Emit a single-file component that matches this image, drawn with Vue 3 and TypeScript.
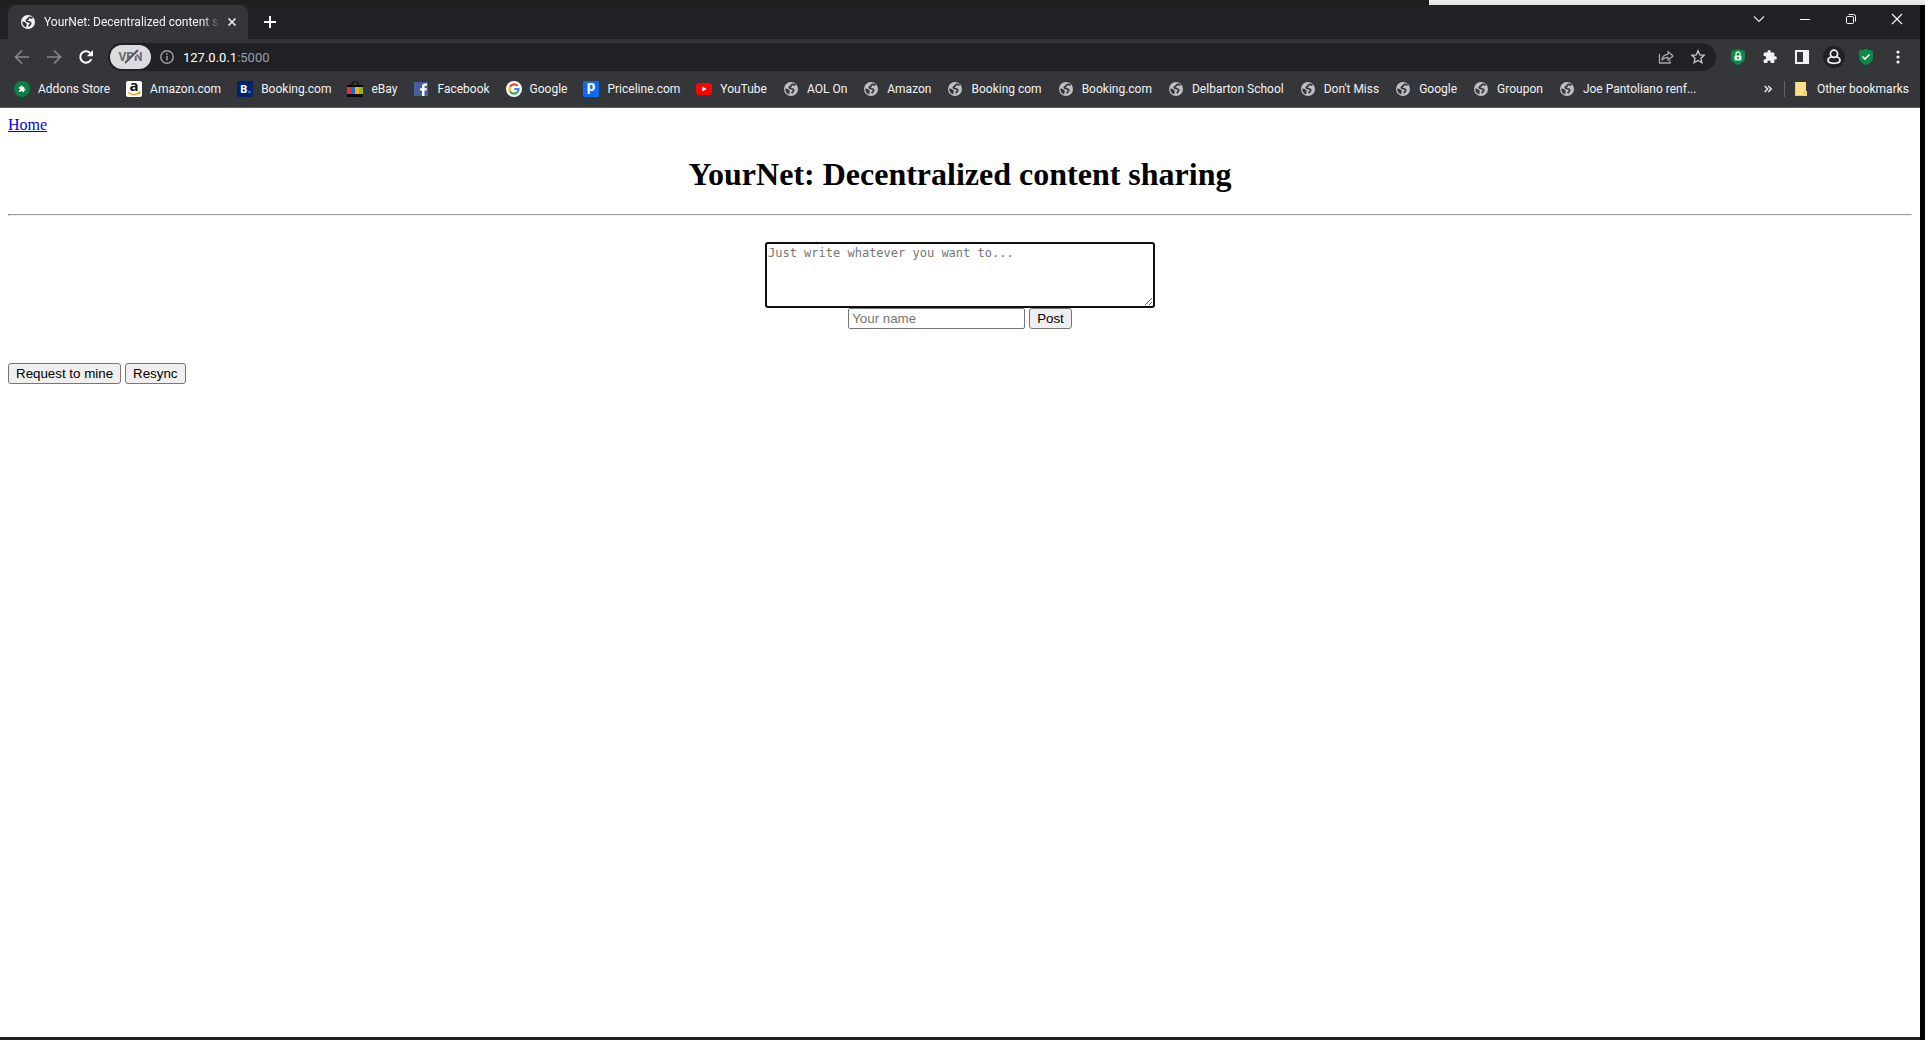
<script setup lang="ts">
import { ref } from 'vue'

interface Bookmark {
  label: string
  icon: string
}

const bookmarks: Bookmark[] = [
  { label: 'Addons Store', icon: 'addons' },
  { label: 'Amazon.com', icon: 'amazon' },
  { label: 'Booking.com', icon: 'booking' },
  { label: 'eBay', icon: 'ebay' },
  { label: 'Facebook', icon: 'facebook' },
  { label: 'Google', icon: 'google' },
  { label: 'Priceline.com', icon: 'priceline' },
  { label: 'YouTube', icon: 'youtube' },
  { label: 'AOL On', icon: 'globe' },
  { label: 'Amazon', icon: 'globe' },
  { label: 'Booking com', icon: 'globe' },
  { label: 'Booking.com', icon: 'globe' },
  { label: 'Delbarton School', icon: 'globe' },
  { label: "Don't Miss", icon: 'globe' },
  { label: 'Google', icon: 'globe' },
  { label: 'Groupon', icon: 'globe' },
  { label: 'Joe Pantoliano renf...', icon: 'globe' },
]

const content = ref('')
const author = ref('')
</script>

<template>
  <div class="desktop">
    <svg class="defs" aria-hidden="true">
      <symbol id="globe" viewBox="0 0 16 16">
        <circle cx="8" cy="8" r="7" fill="currentColor" />
        <path d="M12.500 4.200C10.500 2.800 8.500 3.200 8.300 4.600 8.200 5.500 6.300 5.400 6.300 6.700 6.300 8 10.700 7.200 10.700 9.200 10.700 10.600 9.300 10.700 9 12.300" fill="none" stroke="#35363a" stroke-width="1.800" />
        <path d="M2.300 7.600C4.500 8 6.800 8.700 6.800 10.300 6.800 11.200 6.200 11.800 6.300 13.300L4.600 12.700C3 11.500 2.200 9.700 2.300 7.600Z" fill="#35363a" />
      </symbol>
      <symbol id="puzzle" viewBox="0 0 16 16">
        <path fill="currentColor" d="M13.300 7.300h-.9V4.700c0-.7-.5-1.200-1.200-1.200H8.700v-.9a1.600 1.600 0 0 0-3.200 0v.9H2.900c-.7 0-1.200.5-1.200 1.200v2.400h.9a1.700 1.700 0 0 1 0 3.400h-.9v2.400c0 .7.5 1.200 1.200 1.200h2.400v-.9a1.700 1.700 0 0 1 3.400 0v.9h2.500c.7 0 1.200-.5 1.200-1.200v-2.400h.9a1.600 1.600 0 0 0 0-3.200Z" />
      </symbol>
    </svg>

    <div class="backdrop"><span></span></div>

    <div class="window">
      <header class="chrome">
        <div class="tabstrip">
          <div class="tab">
            <svg class="i16 bright"><use href="#globe" /></svg>
            <span class="tab-title">YourNet: Decentralized content sharing</span>
            <button class="icon-btn small" aria-label="Close tab">
              <svg width="10" height="10" viewBox="0 0 10 10"><path d="M1.500 1.500l7 7M8.500 1.500l-7 7" stroke="#e8eaed" stroke-width="1.700" /></svg>
            </button>
          </div>
          <button class="icon-btn newtab" aria-label="New tab">
            <svg width="12" height="12" viewBox="0 0 12 12"><path d="M6 0v12M0 6h12" stroke="#fff" stroke-width="2" /></svg>
          </button>
          <div class="controls">
            <button class="win-btn" aria-label="Search tabs">
              <svg width="12" height="12" viewBox="0 0 12 12"><path d="M1 3.500l5 5 5-5" fill="none" stroke="#e0e0e0" stroke-width="1.200" /></svg>
            </button>
            <button class="win-btn" aria-label="Minimize">
              <svg width="10" height="10" viewBox="0 0 10 10"><path d="M0 5.500h10" stroke="#fff" /></svg>
            </button>
            <button class="win-btn" aria-label="Restore">
              <svg width="10" height="10" viewBox="0 0 10 10"><g fill="none" stroke="#fff"><rect x=".5" y="2.500" width="7" height="7" rx="1" /><path d="M2.500.5H7.500a2 2 0 0 1 2 2v5" /></g></svg>
            </button>
            <button class="win-btn" aria-label="Close">
              <svg width="10" height="10" viewBox="0 0 10 10"><path d="M0 0l10 10M10 0L0 10" stroke="#fff" stroke-width="1.200" /></svg>
            </button>
          </div>
        </div>

        <div class="toolbar">
          <button class="icon-btn" aria-label="Back">
            <svg width="16" height="16" viewBox="0 0 16 16"><path d="M15 8H2M8 1.500L1.500 8 8 14.500" fill="none" stroke="#86888c" stroke-width="1.700" /></svg>
          </button>
          <button class="icon-btn" aria-label="Forward">
            <svg width="16" height="16" viewBox="0 0 16 16"><path d="M1 8h13M8 1.500L14.500 8 8 14.500" fill="none" stroke="#86888c" stroke-width="1.700" /></svg>
          </button>
          <button class="icon-btn" aria-label="Reload">
            <svg width="16" height="16" viewBox="0 0 16 16"><path d="M13.300 10a5.700 5.700 0 1 1-1.200-6" fill="none" stroke="#fff" stroke-width="2" /><path d="M15 1v6.200H8.800Z" fill="#fff" /></svg>
          </button>
          <div class="omnibox">
            <button class="vpn" aria-label="VPN off">
              <span>VPN</span>
              <svg class="slash" width="20" height="14" viewBox="0 0 20 14"><path d="M4 14L17 1" stroke="#dadce0" stroke-width="2" /><path d="M3 13L16 0" stroke="#55585c" stroke-width="2" /></svg>
            </button>
            <svg class="info" width="14" height="14" viewBox="0 0 14 14"><circle cx="7" cy="7" r="6.200" fill="none" stroke="#9aa0a6" stroke-width="1.400" /><path d="M7 6v4.500M7 3.200v1.600" stroke="#9aa0a6" stroke-width="1.500" /></svg>
            <div class="url"><b>127.0.0.1</b>:5000</div>
            <button class="icon-btn" aria-label="Share">
              <svg width="16" height="16" viewBox="0 0 16 16"><g fill="none" stroke="#a4a6a9" stroke-width="1.300"><path d="M1.500 5v9h10.500v-2.500" /><path d="M4 11c.3-4 2.500-5.500 6-5.700V2.500L15 7l-5 4.300V8.500C7.500 8.400 5.500 9 4 11Z" stroke-linejoin="round" /></g></svg>
            </button>
            <button class="icon-btn" aria-label="Bookmark this tab">
              <svg width="16" height="16" viewBox="0 0 16 16"><path d="M8 1.800l1.800 4.100 4.400.4-3.300 3 1 4.400L8 11.400l-3.900 2.300 1-4.400-3.300-3 4.400-.4Z" fill="none" stroke="#c8cacd" stroke-width="1.300" /></svg>
            </button>
          </div>
          <div class="extensions">
            <button class="icon-btn" aria-label="Password extension">
              <svg width="16" height="16" viewBox="0 0 16 16"><path d="M8 0l7 2v6c0 4-3 6.500-7 8-4-1.500-7-4-7-8V2Z" fill="#0a8a45" /><path d="M6 7V5a2 2 0 0 1 4 0v2" fill="none" stroke="#dff5e8" stroke-width="1.300" /><rect x="4.500" y="6.500" width="7" height="5" rx="1" fill="#dff5e8" /><path d="M7 9h2" stroke="#0a8a45" stroke-width="1.500" /></svg>
            </button>
            <button class="icon-btn" aria-label="Extensions"><svg class="i16 bright"><use href="#puzzle" /></svg></button>
            <button class="icon-btn" aria-label="Side panel">
              <svg width="14" height="14" viewBox="0 0 14 14"><path fill="#f1f3f4" fill-rule="evenodd" d="M0 0h14v14H0ZM2 2v10h6V2Z" /></svg>
            </button>
            <button class="icon-btn" aria-label="Profile">
              <svg width="22" height="22" viewBox="0 0 22 22"><circle cx="11" cy="11" r="11" fill="#202124" /><g fill="none" stroke="#f1f3f4" stroke-width="1.700"><circle cx="11" cy="7.800" r="3.600" /><path d="M8.500 10.800C6 11.500 5 13 5 14.300c0 2 2.500 3 6 3s6-1 6-3c0-1.300-1-2.800-3.500-3.500" /></g></svg>
            </button>
            <button class="icon-btn" aria-label="Safe browsing">
              <svg width="16" height="16" viewBox="0 0 16 16"><path d="M8 0l7 2v6c0 4-3 6.500-7 8-4-1.500-7-4-7-8V2Z" fill="#0a8a45" /><path d="M4.500 7.500L7 10l4.500-4.500" fill="none" stroke="#fff" stroke-width="1.600" /></svg>
            </button>
            <button class="icon-btn" aria-label="Menu">
              <svg width="4" height="14" viewBox="0 0 4 14"><g fill="#f1f3f4"><circle cx="2" cy="2" r="1.600" /><circle cx="2" cy="7" r="1.600" /><circle cx="2" cy="12" r="1.600" /></g></svg>
            </button>
          </div>
        </div>

        <nav class="bookmarks" aria-label="Bookmarks">
          <a v-for="(b, i) in bookmarks" :key="i" href="#" class="bookmark">
            <svg class="i16" viewBox="0 0 16 16">
              <use v-if="b.icon === 'globe'" href="#globe" />
              <g v-else-if="b.icon === 'addons'">
                <circle cx="8" cy="8" r="8" fill="#0a8043" />
                <use href="#puzzle" x="4" y="4" width="8" height="8" color="#fff" />
              </g>
              <g v-else-if="b.icon === 'amazon'">
                <rect width="16" height="16" rx="2" fill="#fff" />
                <text x="8" y="10" text-anchor="middle" class="glyph" font-size="15" fill="#111">a</text>
                <path d="M2 11.500c4 2.700 8 2.700 11.500.3M12 11.300l2-.2-.4 2" fill="none" stroke="#f90" stroke-width="1.200" />
              </g>
              <g v-else-if="b.icon === 'booking'">
                <rect width="16" height="16" rx="2" fill="#02236c" />
                <text x="3" y="12" class="glyph" font-size="11" fill="#fff">B</text>
                <circle cx="12.500" cy="11" r="1.200" fill="#18a0e8" />
              </g>
              <g v-else-if="b.icon === 'ebay'">
                <path d="M5 5V3a3 2.500 0 0 1 6 0v2" fill="none" stroke="#0a0a0a" stroke-width="1.200" />
                <path d="M0 4h16v12H0Z" fill="#0a0a0a" />
                <path d="M0 6h4v7H0Z" fill="#e53238" /><path d="M4 6h4v7H4Z" fill="#0f6fd8" /><path d="M8 6h4v7H8Z" fill="#f5af02" /><path d="M12 6h4v7h-4Z" fill="#86b817" />
              </g>
              <g v-else-if="b.icon === 'facebook'">
                <path d="M1 1h14v14H1Z" fill="#4460a0" />
                <path d="M9 15V9.500H7V7.300h2V5.500C9 3.500 10.200 2.500 12 2.500h2v2.200h-1.300c-.9 0-1.200.4-1.200 1.200v1.400h2.400l-.4 2.200h-2V15Z" fill="#fff" />
              </g>
              <g v-else-if="b.icon === 'google'">
                <circle cx="8" cy="8" r="8" fill="#fff" />
                <g fill="none" stroke-width="2.200">
                  <path d="M11.500 4.900A4.600 4.600 0 0 0 4 5.700" stroke="#ea4335" />
                  <path d="M4 5.700a4.600 4.600 0 0 0 0 4.600" stroke="#fbbc05" />
                  <path d="M4 10.300a4.600 4.600 0 0 0 7.200 1.100" stroke="#34a853" />
                  <path d="M11.200 11.400A4.600 4.600 0 0 0 12.600 8H8.200" stroke="#4285f4" />
                </g>
              </g>
              <g v-else-if="b.icon === 'priceline'">
                <rect width="16" height="16" rx="1" fill="#0a6cf5" />
                <text x="8" y="10" text-anchor="middle" class="glyph" font-size="14" fill="#fff">p</text>
              </g>
              <g v-else>
                <rect y="2" width="16" height="12" rx="3" fill="#f00" />
                <path d="M6.300 5.500v5L10.500 8Z" fill="#fff" />
              </g>
            </svg>
            <span>{{ b.label }}</span>
          </a>
          <div class="bookmarks-end">
            <button class="icon-btn small" aria-label="More bookmarks">
              <svg width="8" height="8" viewBox="0 0 8 8"><path d="M.7 1l3 3-3 3M4.200 1l3 3-3 3" fill="none" stroke="#e8eaed" stroke-width="1.500" /></svg>
            </button>
            <span class="divider"></span>
            <a href="#" class="bookmark">
              <svg class="i16" viewBox="0 0 16 16"><path d="M2 1h11v9h1v5H2Z" fill="#ffe08a" /><path d="M2.500 1v13.500H11V11h2v3.500" fill="none" stroke="#efc74f" /></svg>
              <span>Other bookmarks</span>
            </a>
          </div>
        </nav>
      </header>

      <main class="page">
        <a class="home" href="#">Home</a>
        <h1>YourNet: Decentralized content sharing</h1>
        <hr />
        <form class="post-form" @submit.prevent>
          <textarea v-model="content" aria-label="Content" placeholder="Just write whatever you want to..."></textarea>
          <div class="row">
            <input v-model="author" type="text" aria-label="Your name" placeholder="Your name" />
            <button type="submit">Post</button>
          </div>
        </form>
        <div class="row actions">
          <button type="button">Request to mine</button>
          <button type="button">Resync</button>
        </div>
      </main>
    </div>
  </div>
</template>

<style>
body {
  margin: 0;
}
</style>

<style scoped>
* {
  box-sizing: border-box;
}
.desktop {
  display: flex;
  flex-direction: column;
  min-height: 100vh;
  background: #000;
}
.defs {
  position: absolute;
  width: 0;
  height: 0;
}
.backdrop {
  display: flex;
  justify-content: flex-end;
  height: 5px;
  background: #20201f;
}
.backdrop span {
  width: 25.760%;
  background: linear-gradient(#f0f0f0, #dcdcdc);
}
.window {
  flex: 1;
  display: flex;
  flex-direction: column;
  margin-right: 5px;
  border-bottom: 3px solid #242122;
}
.chrome {
  font-family: Roboto, "Noto Sans", sans-serif;
  font-size: 12px;
  color: #f1f3f4;
  background: #35363a;
  border-bottom: 1px solid #5d5e62;
}
.chrome button {
  padding: 0;
  border: 0;
  background: none;
}
.chrome svg {
  display: block;
  flex: none;
  overflow: visible;
}
.i16 {
  width: 16px;
  height: 16px;
  color: #bdc1c6;
}
.bright {
  color: #f1f3f4;
}
.icon-btn {
  display: flex;
  align-items: center;
  justify-content: center;
  flex: none;
  width: 32px;
  height: 28px;
}
.icon-btn.small {
  width: 16px;
}
.tabstrip {
  display: flex;
  height: 34px;
  padding-left: 8px;
  background: #202124;
}
.tab {
  display: flex;
  align-items: center;
  gap: 8px;
  width: 240px;
  padding: 0 8px 0 12px;
  border-radius: 8px 8px 0 0;
  background: #35363a;
}
.tab-title {
  flex: 1;
  margin-right: -4px;
  overflow: hidden;
  white-space: nowrap;
  mask-image: linear-gradient(to right, #000 90%, transparent);
}
.newtab {
  width: 44px;
  height: 34px;
}
.controls {
  display: flex;
  margin-left: auto;
}
.win-btn {
  display: flex;
  align-items: center;
  justify-content: center;
  width: 46px;
  height: 28px;
}
.toolbar {
  display: flex;
  align-items: center;
  height: 36px;
  padding: 0 6px;
}
.omnibox {
  flex: 1;
  display: flex;
  align-items: center;
  height: 28px;
  margin-left: 6px;
  padding: 0 2px;
  border-radius: 14px;
  background: #202124;
}
.chrome .vpn {
  position: relative;
  width: 41px;
  height: 24px;
  border-radius: 12px;
  background: #dadce0;
  color: #686b70;
  font: bold 12px Roboto, sans-serif;
}
.slash {
  position: absolute;
  left: 12px;
  top: 5px;
}
.info {
  margin: 0 9px;
}
.url {
  flex: 1;
  font-size: 13px;
  color: #9aa0a6;
}
.url b {
  font-weight: 400;
  color: #fff;
}
.extensions {
  display: flex;
  margin-left: 6px;
}
.bookmarks {
  display: flex;
  align-items: center;
  gap: 16px;
  height: 32px;
  padding: 0 11px 4px 14px;
}
.bookmark {
  display: flex;
  align-items: center;
  gap: 8px;
  color: inherit;
  text-decoration: none;
  white-space: nowrap;
}
.glyph {
  font-family: "Open Sans", sans-serif;
  font-weight: 700;
}
.bookmarks-end {
  display: flex;
  align-items: center;
  gap: 8px;
  margin-left: auto;
}
.divider {
  width: 1px;
  height: 16px;
  background: #5f6368;
}
.page {
  flex: 1;
  padding: 8px;
  background: #fff;
  color: #000;
  font: 16px/18px "Liberation Serif", serif;
}
.home {
  color: #0000ee;
}
h1 {
  margin: 22px 0 21px;
  font-size: 32px;
  line-height: 37px;
  text-align: center;
}
hr {
  margin: 0 0 26px;
}
.post-form {
  display: flex;
  flex-direction: column;
  align-items: center;
}
textarea {
  width: 390px;
  height: 66px;
  padding: 2px 1px;
  border: 2px solid #101010;
  border-radius: 3px;
  font: 12px/15px "DejaVu Sans Mono", monospace;
}
.row {
  display: flex;
  gap: 4px;
}
.actions {
  margin-top: 34px;
}
.row input,
.row button {
  height: 21px;
  border: 1px solid #767676;
  font-family: "Liberation Sans", sans-serif;
}
.row input {
  width: 177px;
  padding: 1px 3px;
  border-radius: 2px;
}
.row button {
  padding: 0 7px;
  border-radius: 3px;
  background: #efefef;
  color: #000;
}
input::placeholder,
textarea::placeholder {
  color: #757575;
}
</style>
